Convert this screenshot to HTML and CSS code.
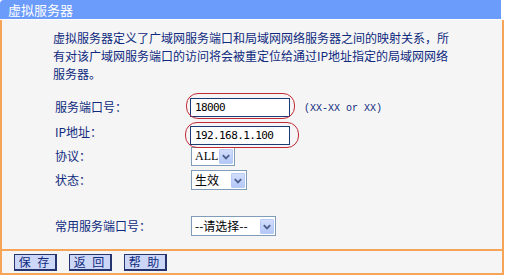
FILE: index.html
```html
<!DOCTYPE html>
<html>
	<head>
		<meta charset="UTF-8">
		<title>虚拟服务器</title>
		<link rel="stylesheet" href="styles.css">
	</head>
	<body>
		<div class="panel">
			<div class="title">虚拟服务器</div>
			<div class="content">
				<p class="desc">虚拟服务器定义了广域网服务端口和局域网网络服务器之间的映射关系，所<br>有对该广域网服务端口的访问将会被重定位给通过IP地址指定的局域网网络<br>服务器。</p>
				<div class="row r1">
					<span class="label">服务端口号：</span>
					<div class="field"><input class="text" type="text" value="18000"><i class="mark"></i></div>
					<span class="hint">(XX-XX or XX)</span>
				</div>
				<div class="row r2">
					<span class="label">IP地址：</span>
					<div class="field ip"><input class="text" type="text" value="192.168.1.100"><i class="mark mark-ip"></i></div>
				</div>
				<div class="row r3">
					<span class="label">协议：</span>
					<div class="select s-all"><span class="val latin">ALL</span><span class="arrow"><svg width="13" height="13" viewBox="0 0 13 13"><polyline points="3,5 6.5,8.5 10,5" fill="none" stroke="#4b5f8c" stroke-width="2"/></svg></span></div>
				</div>
				<div class="row r4">
					<span class="label">状态：</span>
					<div class="select s-state"><span class="val">生效</span><span class="arrow"><svg width="13" height="13" viewBox="0 0 13 13"><polyline points="3,5 6.5,8.5 10,5" fill="none" stroke="#4b5f8c" stroke-width="2"/></svg></span></div>
				</div>
				<div class="row r5">
					<span class="label">常用服务端口号：</span>
					<div class="select s-common"><span class="val">--请选择--</span><span class="arrow"><svg width="13" height="13" viewBox="0 0 13 13"><polyline points="3,5 6.5,8.5 10,5" fill="none" stroke="#4b5f8c" stroke-width="2"/></svg></span></div>
				</div>
			</div>
			<div class="footer">
				<a class="btn" href="#">保 存</a>
				<a class="btn" href="#">返 回</a>
				<a class="btn" href="#">帮 助</a>
			</div>
		</div>
	</body>
</html>
```

FILE: styles.css
```css
*{
	margin: 0;
	padding: 0;
	box-sizing: border-box;
}

body{
	background: #fff;
	font: 12px/18px "Noto Sans CJK SC", sans-serif;
	color: #0f2a7e;
}

.panel{
	width: 504px;
}

.title{
	width: 501px;
	height: 19px;
	line-height: 19px;
	padding-left: 8px;
	background: #6b9bfb;
	border-top-left-radius: 4px;
	color: #fff;
	font-size: 13px;
	margin-bottom: 1px;
}

.content{
	height: 229px;
	background: #f5f5f5;
	border-left: 2px solid #f6a458;
	border-right: 2px solid #f6a458;
	padding-top: 9px;
}

.desc{
	padding-left: 51px;
	line-height: 18px;
	white-space: nowrap;
}

.row{
	display: flex;
	align-items: center;
	padding-left: 53px;
}

.r1{ height: 22px; margin-top: 13px; }
.r2{ height: 28px; }
.r3{ height: 20px; }
.r4{ height: 28px; }
.r5{ height: 28px; margin-top: 18px; }

.label{
	width: 135px;
	flex: none;
}

.field{
	position: relative;
}

.field.ip{
	margin-top: 7px;
}

.text{
	display: block;
	width: 100px;
	height: 19px;
	border: 1px solid #1d3a78;
	background: #fff;
	padding: 0 4px;
	font: 11px "DejaVu Sans Mono", monospace;
	letter-spacing: -0.6px;
	color: #000;
	outline: none;
}

/* 红色圈注 */
.mark{
	position: absolute;
	left: -4px;
	right: -5px;
	top: -5px;
	bottom: -2px;
	border: 1px solid #c02a35;
	border-radius: 12px;
}

.mark-ip{
	left: -5px;
	right: -9px;
	top: -4px;
	bottom: -3px;
}

.hint{
	margin-left: 14px;
	margin-top: 3px;
	font: 10px "Liberation Mono", monospace;
	color: #0f2a7e;
}

.select{
	display: flex;
	align-items: center;
	justify-content: space-between;
	margin-left: 1px;
	height: 20px;
	border: 1px solid #7f9db9;
	background: #fff;
	padding: 0 1px 0 3px;
	color: #000;
}

.s-all{ width: 44px; height: 19px; }
.s-state{ width: 56px; }
.s-common{ width: 85px; }

.latin{
	font: 12px "Liberation Serif", serif;
}

.arrow{
	display: flex;
	align-items: center;
	justify-content: center;
	width: 14px;
	height: 15px;
	background: linear-gradient(#d2defc, #b4c8f6);
	border: 1px solid #b7cbf6;
	border-radius: 1px;
}

.footer{
	height: 26px;
	background: #f5f5f5;
	border: 2px solid #f6a458;
	padding: 3px 0 0 12px;
	display: flex;
	gap: 12px;
}

.btn{
	display: block;
	width: 43px;
	height: 17px;
	line-height: 14px;
	text-align: center;
	background: #ccd6f7;
	border: 1px solid #25346e;
	border-right-width: 2px;
	border-bottom-width: 2px;
	color: #0f2a7e;
	text-decoration: none;
	font-size: 12px;
	letter-spacing: 2px;
}
```
